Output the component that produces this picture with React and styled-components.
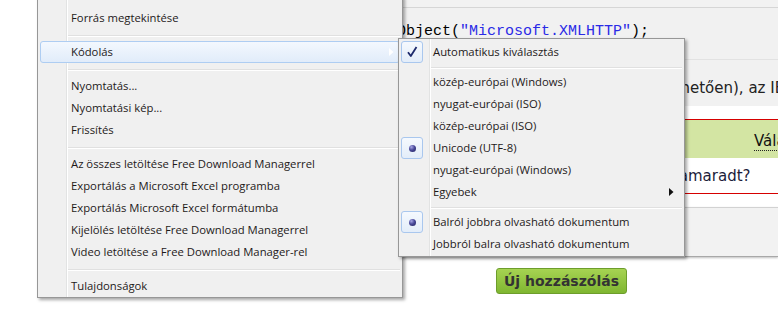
import React from 'react';
import styled, { createGlobalStyle, css } from 'styled-components';

const GlobalStyle = createGlobalStyle`
  html, body { margin: 0; padding: 0; background: #fff; }
  body { width: 778px; height: 312px; overflow: hidden; }
`;

const Screen = styled.div`
  position: relative;
  width: 778px;
  height: 312px;
  overflow: hidden;
  background: #fff;
  font-family: "DejaVu Sans", Verdana, sans-serif;
`;

const Page = styled.div`
  margin-left: 300px;
  display: flex;
  flex-direction: column;
`;

const TopStrip = styled.div`
  height: 7px;
  background: #f2f2f2;
  border-bottom: 1px solid #d6d6d6;
`;

const CodeBox = styled.div`
  box-sizing: border-box;
  height: 52px;
  padding: 15px 0 0 97px;
  text-indent: -189px;
  background: #f1f1f1;
  border-bottom: 1px solid #e2e2e2;
  font: 15px/18px "Liberation Mono", "Courier New", monospace;
  color: #000;
  white-space: nowrap;
`;

const Str = styled.span`
  color: #2a2ae6;
`;

const TextBox = styled.div`
  box-sizing: border-box;
  height: 46px;
  padding-top: 18px;
  background: #f1f1f1;
`;

const Sentence = styled.div`
  display: flex;
  font-size: 15px;
  line-height: 20px;
  color: ${p => p.$color || '#222'};
  white-space: nowrap;
`;

const Lead = styled.div`
  flex: 0 0 ${p => p.$w}px;
  display: flex;
  justify-content: flex-end;
`;

const Gap = styled.div`
  height: ${p => p.$h}px;
  background: ${p => p.$bg || '#fff'};
`;

const Table = styled.div`
  border-top: 1px solid #d60000;
  border-bottom: 1px solid #d60000;
  display: flex;
  flex-direction: column;
`;

const HeadRow = styled.div`
  box-sizing: border-box;
  height: 38px;
  padding: 11px 0 0 454px;
  background: #d3e5a3;
  white-space: nowrap;
`;

const HeadLink = styled.span`
  font-size: 15px;
  line-height: 16px;
  color: #111;
  border-bottom: 1px dotted #222;
`;

const BodyRow = styled.div`
  box-sizing: border-box;
  height: 35px;
  padding-top: 8px;
  background: #fff;
`;

const GrayBox = styled.div`
  height: 48px;
  background: #f2f2f2;
  border-top: 1px solid #d2d2d2;
  border-bottom: 1px solid #a8a8a8;
  box-shadow: 0 1px 2px rgba(0, 0, 0, 0.25);
`;

const ButtonRow = styled.div`
  display: flex;
  padding: 11px 0 0 196px;
`;

const GreenButton = styled.button`
  box-sizing: border-box;
  height: 26px;
  width: 131px;
  padding: 0;
  border: 1px solid #6d9d2c;
  border-radius: 3px;
  background: linear-gradient(#a6d352, #7fb631);
  font: bold 14px/24px "DejaVu Sans", Verdana, sans-serif;
  color: #333;
`;

/* ---------- menus ---------- */

const MenuPanel = styled.div`
  position: absolute;
  left: ${p => p.$left}px;
  top: ${p => p.$top}px;
  width: ${p => p.$width}px;
  box-sizing: border-box;
  padding: ${p => p.$pt}px 0 ${p => p.$pb}px;
  border: 1px solid #979797;
  background:
    linear-gradient(#e2e3e3, #e2e3e3) ${p => p.$gutter}px 0 / 1px 100% no-repeat,
    linear-gradient(#ffffff, #ffffff) ${p => p.$gutter + 1}px 0 / 1px 100% no-repeat,
    #f0f0f0;
  box-shadow: 2px 2px 3px rgba(0, 0, 0, 0.35);
  font: 11.3px "Open Sans", "Noto Sans", sans-serif;
  color: #1e1a1a;
  display: flex;
  flex-direction: column;
`;

const Item = styled.div`
  box-sizing: border-box;
  display: flex;
  align-items: center;
  height: 22px;
  margin: 0 2px;
  border: 1px solid transparent;
  border-radius: 3px;
  white-space: nowrap;
  ${p => p.$hover && css`
    border-color: #aecdf2;
    background: linear-gradient(#f3f8fe, #e1ecfa);
  `}
`;

const IconCell = styled.span`
  box-sizing: border-box;
  flex: 0 0 22px;
  height: 22px;
  margin: -1px 0 -1px -1px;
  display: flex;
  align-items: center;
  justify-content: center;
  border-radius: 3px;
  ${p => p.$on && css`
    border: 1px solid #a9c7ee;
    background: linear-gradient(#f5f9fe, #e3edf9);
  `}
`;

const Label = styled.span`
  margin-left: ${p => p.$gap}px;
  line-height: 20px;
`;

const Arrow = styled.svg`
  margin-left: auto;
  margin-right: ${p => p.$mr}px;
  flex: 0 0 auto;
`;

const Separator = styled.div`
  height: ${p => p.$h}px;
  margin: 0 2px 0 ${p => p.$ml}px;
  background:
    linear-gradient(#e0e0e0, #e0e0e0) 0 ${p => p.$at}px / 100% 1px no-repeat,
    linear-gradient(#ffffff, #ffffff) 0 ${p => p.$at + 1}px / 100% 1px no-repeat;
`;

const Dot = styled.span`
  width: 7px;
  height: 7px;
  border-radius: 50%;
  background: radial-gradient(circle at 35% 30%, #a7a7e6 0%, #4a4a9a 45%, #1e1e5a 100%);
`;

const Check = () => (
  <svg width="20" height="20" viewBox="0 0 20 20">
    <path d="M6 10.2 L8.8 14 L14.5 5" fill="none" stroke="#1d2a6c" strokeWidth="1.8" strokeLinejoin="round" />
  </svg>
);

const SubArrow = ({ color, mr }) => (
  <Arrow $mr={mr} width="5" height="8" viewBox="0 0 5 8">
    <path d="M0 0 L4.5 4 L0 8 Z" fill={color} />
  </Arrow>
);

const mainSections = [
  ['Forrás megtekintése'],
  ['Kódolás'],
  ['Nyomtatás...', 'Nyomtatási kép...', 'Frissítés'],
  [
    'Az összes letöltése Free Download Managerrel',
    'Exportálás a Microsoft Excel programba',
    'Exportálás Microsoft Excel formátumba',
    'Kijelölés letöltése Free Download Managerrel',
    'Video letöltése a Free Download Manager-rel',
  ],
  ['Tulajdonságok'],
];

const subSections = [
  [{ t: 'Automatikus kiválasztás', icon: 'check' }],
  [
    { t: 'közép-európai (Windows)' },
    { t: 'nyugat-európai (ISO)' },
    { t: 'közép-európai (ISO)' },
    { t: 'Unicode (UTF-8)', icon: 'dot' },
    { t: 'nyugat-európai (Windows)' },
    { t: 'Egyebek', sub: true },
  ],
  [
    { t: 'Balról jobbra olvasható dokumentum', icon: 'dot' },
    { t: 'Jobbról balra olvasható dokumentum' },
  ],
];

function MainMenu() {
  return (
    <MenuPanel $left={37} $top={-4} $width={366} $pt={10} $pb={0} $gutter={28}>
      {mainSections.map((sec, i) => (
        <React.Fragment key={i}>
          {i > 0 && <Separator $h={12} $at={6} $ml={30} />}
          {sec.map(label => {
            const hover = label === 'Kódolás';
            return (
              <Item key={label} $hover={hover}>
                <IconCell />
                <Label $gap={9}>{label}</Label>
                {hover && <SubArrow color="#ffffff" mr={5} />}
              </Item>
            );
          })}
        </React.Fragment>
      ))}
    </MenuPanel>
  );
}

function SubMenu() {
  return (
    <MenuPanel $left={398} $top={38} $width={287} $pt={2} $pb={1} $gutter={30}>
      {subSections.map((sec, i) => (
        <React.Fragment key={i}>
          {i > 0 && <Separator $h={8} $at={4} $ml={32} />}
          {sec.map(it => (
            <Item key={it.t}>
              <IconCell $on={!!it.icon}>
                {it.icon === 'check' && <Check />}
                {it.icon === 'dot' && <Dot />}
              </IconCell>
              <Label $gap={10}>{it.t}</Label>
              {it.sub && <SubArrow color="#111" mr={7} />}
            </Item>
          ))}
        </React.Fragment>
      ))}
    </MenuPanel>
  );
}

export default function App() {
  return (
    <>
      <GlobalStyle />
      <Screen>
        <Page>
          <TopStrip />
          <CodeBox>
            xmlhttp = new ActiveXObject(<Str>"Microsoft.XMLHTTP"</Str>);
          </CodeBox>
          <TextBox>
            <Sentence>
              <Lead $w={390}><span>(felteh</span></Lead>
              <span>etően), az IE6-ban is ez működik.</span>
            </Sentence>
          </TextBox>
          <Gap $h={13} />
          <Table>
            <HeadRow>
              <HeadLink>Válasz</HeadLink>
            </HeadRow>
            <BodyRow>
              <Sentence $color="#1c1c3a">
                <Lead $w={388}><span>nyitva </span></Lead>
                <span>maradt?</span>
              </Sentence>
            </BodyRow>
          </Table>
          <Gap $h={13} />
          <GrayBox />
          <ButtonRow>
            <GreenButton>Új hozzászólás</GreenButton>
          </ButtonRow>
        </Page>
        <MainMenu />
        <SubMenu />
      </Screen>
    </>
  );
}
